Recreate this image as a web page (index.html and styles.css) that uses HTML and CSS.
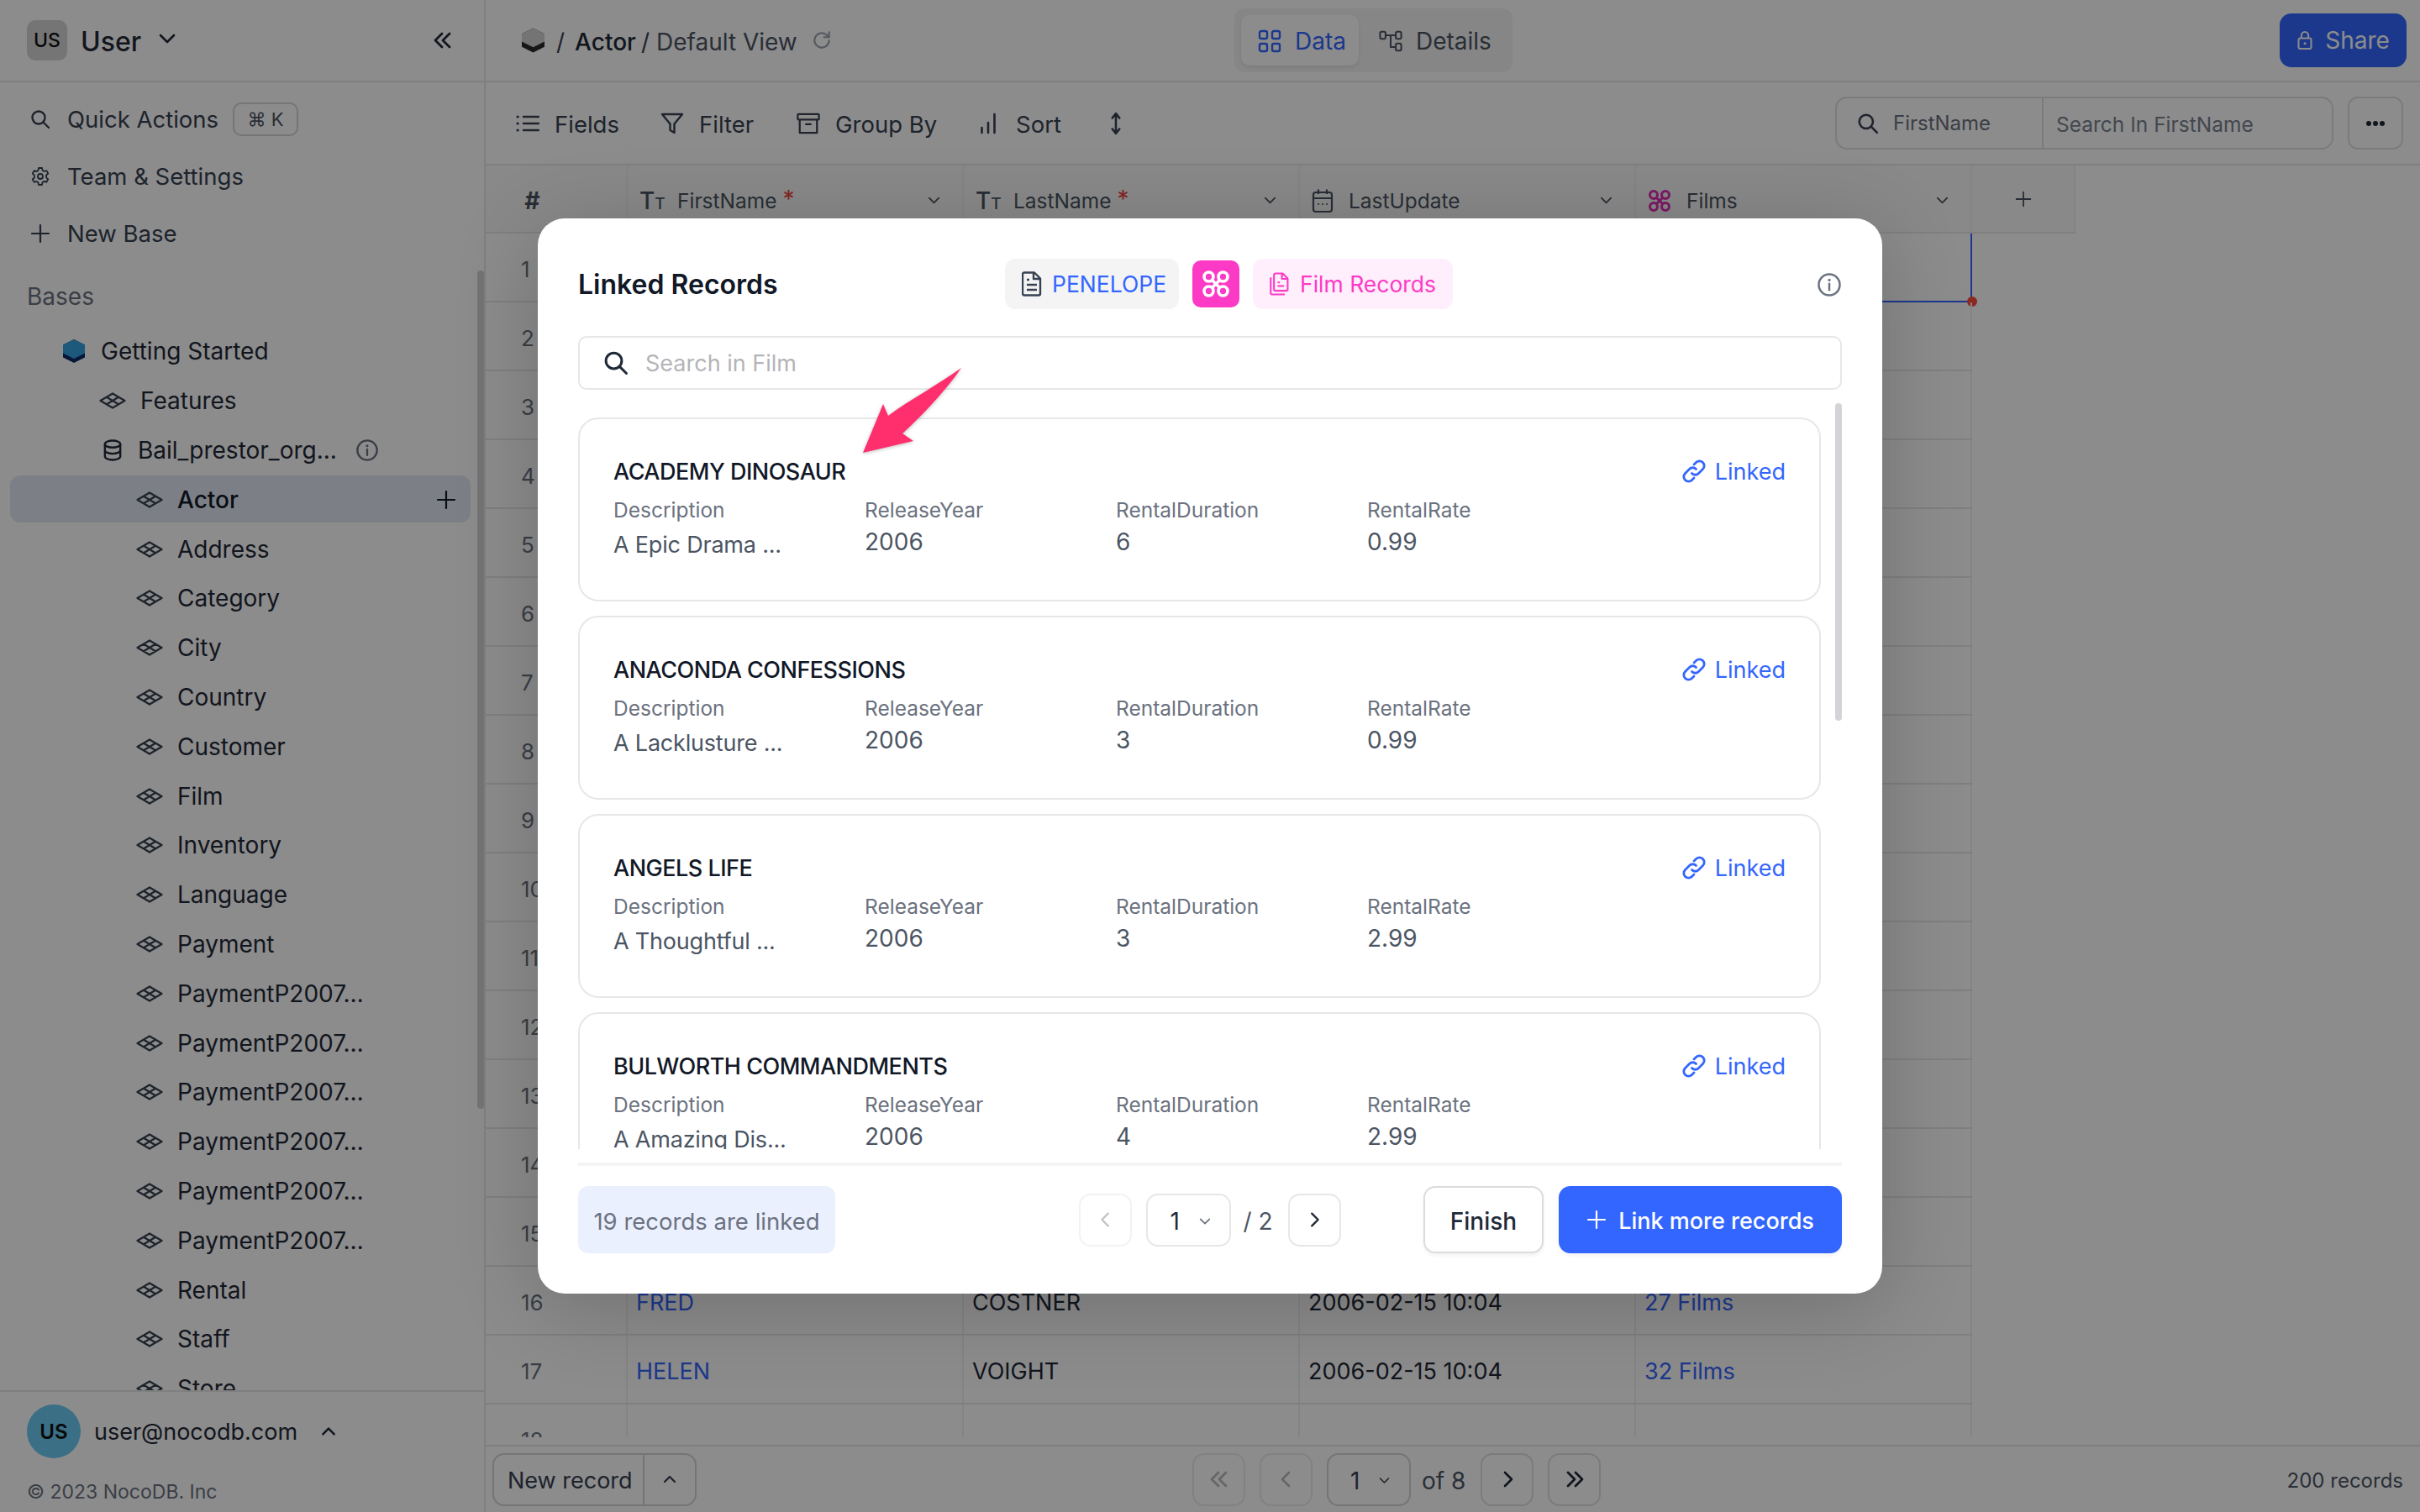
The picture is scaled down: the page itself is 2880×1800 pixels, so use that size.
FILE: index.html
```html
<!DOCTYPE html>
<html lang="en">
  <head>
    <meta charset="UTF-8" />
    <title>Actor - Default View</title>
    <link rel="stylesheet" href="styles.css">
  </head>
  <body>
    <!-- Icon set -->
    <svg class="defs" width="0" height="0">
      <symbol id="i-table" viewBox="0 0 32 20"><path d="M1.5 10 16 1.5 30.500 10 16 18.500ZM9 5.800 23 14.200M23 5.800 9 14.200" fill="none" stroke="currentColor" stroke-width="2.300" stroke-linejoin="round"/></symbol>
      <symbol id="i-search" viewBox="0 0 24 24"><circle cx="10" cy="10" r="7.500" fill="none" stroke="currentColor" stroke-width="2.400"/><path d="m15.500 15.500 6.500 6.500" stroke="currentColor" stroke-width="2.400" stroke-linecap="round"/></symbol>
      <symbol id="i-plus" viewBox="0 0 24 24"><path d="M12 2v20M2 12h20" stroke="currentColor" stroke-width="2.200" stroke-linecap="round"/></symbol>
      <symbol id="i-down" viewBox="0 0 24 24"><path d="m4 8 8 8 8-8" fill="none" stroke="currentColor" stroke-width="2.600" stroke-linecap="round" stroke-linejoin="round"/></symbol>
      <symbol id="i-up" viewBox="0 0 24 24"><path d="m4 16 8-8 8 8" fill="none" stroke="currentColor" stroke-width="3" stroke-linecap="round" stroke-linejoin="round"/></symbol>
      <symbol id="i-left" viewBox="0 0 24 24"><path d="m15 4-8 8 8 8" fill="none" stroke="currentColor" stroke-width="2.600" stroke-linecap="round" stroke-linejoin="round"/></symbol>
      <symbol id="i-right" viewBox="0 0 24 24"><path d="m9 4 8 8-8 8" fill="none" stroke="currentColor" stroke-width="2.600" stroke-linecap="round" stroke-linejoin="round"/></symbol>
      <symbol id="i-lefts" viewBox="0 0 24 24"><path d="m11 4-8 8 8 8M20 4l-8 8 8 8" fill="none" stroke="currentColor" stroke-width="2.800" stroke-linecap="round" stroke-linejoin="round"/></symbol>
      <symbol id="i-rights" viewBox="0 0 24 24"><path d="m4 4 8 8-8 8M13 4l8 8-8 8" fill="none" stroke="currentColor" stroke-width="2.800" stroke-linecap="round" stroke-linejoin="round"/></symbol>
      <symbol id="i-gear" viewBox="0 0 24 24"><g fill="none" stroke="currentColor" stroke-width="1.800" stroke-linejoin="round"><circle cx="12" cy="12" r="3"/><path d="M10 2h4l.6 2.900 1.900 1.100 2.800-.9 2 3.400-2.200 2v2.900l2.200 2-2 3.400-2.800-.9-1.900 1.100L14 22h-4l-.6-2.900-1.900-1.100-2.800.9-2-3.400 2.200-2v-2.900l-2.200-2 2-3.400 2.800.9 1.900-1.100Z"/></g></symbol>
      <symbol id="i-db" viewBox="0 0 24 28"><g fill="none" stroke="currentColor" stroke-width="2.600"><ellipse cx="12" cy="6" rx="10" ry="4.500"/><path d="M2 6v16c0 2.500 4.500 4.500 10 4.500s10-2 10-4.500V6M2 14c0 2.500 4.500 4.500 10 4.500s10-2 10-4.500"/></g></symbol>
      <symbol id="i-info" viewBox="0 0 24 24"><circle cx="12" cy="12" r="10" fill="none" stroke="currentColor" stroke-width="2"/><path d="M12 11v6" stroke="currentColor" stroke-width="2" stroke-linecap="round"/><circle cx="12" cy="7.500" r="1.300" fill="currentColor"/></symbol>
      <symbol id="i-reload" viewBox="0 0 24 24"><path d="M20 12a8 8 0 1 1-2.500-5.800L20 8.500M20 3v5.500h-5.500" fill="none" stroke="currentColor" stroke-width="2" stroke-linecap="round" stroke-linejoin="round"/></symbol>
      <symbol id="i-grid" viewBox="0 0 28 28"><g fill="none" stroke="currentColor" stroke-width="2.400"><rect x="2" y="2" width="9" height="9" rx="2"/><rect x="17" y="2" width="9" height="9" rx="2"/><rect x="2" y="17" width="9" height="9" rx="2"/><rect x="17" y="17" width="9" height="9" rx="2"/></g></symbol>
      <symbol id="i-tree" viewBox="0 0 30 28"><g fill="none" stroke="currentColor" stroke-width="2.200" stroke-linejoin="round"><rect x="1.500" y="2" width="7" height="9" rx="2"/><rect x="21.500" y="2" width="7" height="9" rx="2"/><rect x="21.500" y="17" width="7" height="9" rx="2"/><path d="M8.500 6.500h13M15 6.500v15h6.500"/></g></symbol>
      <symbol id="i-lock" viewBox="0 0 24 28"><g fill="none" stroke="currentColor" stroke-width="2.400" stroke-linejoin="round"><rect x="3" y="11" width="18" height="15" rx="2.500"/><path d="M7 11V7a5 5 0 0 1 10 0v4"/></g><circle cx="12" cy="18.500" r="1.800" fill="currentColor"/></symbol>
      <symbol id="i-list" viewBox="0 0 28 24"><path d="M9 4h18M9 12h18M9 20h18" stroke="currentColor" stroke-width="2.400" stroke-linecap="round"/><path d="M2 4h.2M2 12h.2M2 20h.2" stroke="currentColor" stroke-width="3.200" stroke-linecap="round"/></symbol>
      <symbol id="i-filter" viewBox="0 0 28 28"><path d="M2 3h24l-9.500 11.500V25l-5-3v-7.500Z" fill="none" stroke="currentColor" stroke-width="2.400" stroke-linejoin="round"/></symbol>
      <symbol id="i-archive" viewBox="0 0 30 28"><g fill="none" stroke="currentColor" stroke-width="2.400" stroke-linejoin="round"><rect x="1.500" y="2" width="27" height="7" rx="1"/><path d="M4 9v17h22V9M11 15h8"/></g></symbol>
      <symbol id="i-bars" viewBox="0 0 20 28"><path d="M2.500 25v-6M10 25V13M17.500 25V3" stroke="currentColor" stroke-width="2.600" stroke-linecap="round"/></symbol>
      <symbol id="i-sort" viewBox="0 0 12 26"><path d="M6 3v20M2 7l4-5 4 5M2 19l4 5 4-5" fill="none" stroke="currentColor" stroke-width="2.400" stroke-linecap="round" stroke-linejoin="round"/></symbol>
      <symbol id="i-cal" viewBox="0 0 26 30"><g fill="none" stroke="currentColor" stroke-width="2.200" stroke-linejoin="round"><rect x="2" y="5" width="22" height="23" rx="3"/><path d="M2 12h22M8 1.500V7M18 1.500V7"/></g><path d="M8 19h.1M13 19h.1M18 19h.1" stroke="currentColor" stroke-width="2" stroke-linecap="round"/></symbol>
      <symbol id="i-ltar" viewBox="0 0 28 28"><g fill="none" stroke="currentColor" stroke-width="3"><circle cx="7" cy="7" r="4.500"/><circle cx="21" cy="7" r="4.500"/><circle cx="7" cy="21" r="4.500"/><circle cx="21" cy="21" r="4.500"/><path d="m10.500 10.500 7 7M17.500 10.500l-7 7"/></g></symbol>
      <symbol id="i-doc" viewBox="0 0 24 30"><path d="M3 1.500h12l7 7v18a2 2 0 0 1-2 2H3a2 2 0 0 1-2-2v-23a2 2 0 0 1 2-2ZM14 2v7h7M6 10h3M6 16h12M6 22h12" fill="none" stroke="currentColor" stroke-width="2.400" stroke-linejoin="round"/></symbol>
      <symbol id="i-docs" viewBox="0 0 28 32"><path d="M8 1.500h10l7 7v15a2 2 0 0 1-2 2H8a2 2 0 0 1-2-2v-20a2 2 0 0 1 2-2ZM1.500 7v22a1.500 1.500 0 0 0 1.500 1.500h18M17 2v7h7M11 14h3M11 19h9" fill="none" stroke="currentColor" stroke-width="2.400" stroke-linejoin="round"/></symbol>
      <symbol id="i-link" viewBox="0 0 28 28"><path d="M11.500 16.500a5.500 5.500 0 0 0 8 0l5-5a5.600 5.600 0 0 0-8-8L14 6M16.500 11.500a5.500 5.500 0 0 0-8 0l-5 5a5.600 5.600 0 0 0 8 8L14 22" fill="none" stroke="currentColor" stroke-width="2.800" stroke-linecap="round" stroke-linejoin="round"/></symbol>
    </svg>

    <div class="app">
      <!-- Left navigation -->
      <aside class="sidebar">
        <div class="side-head">
          <span class="ws-badge">US</span>
          <span class="ws-name">User</span>
          <svg class="ws-chevron"><use href="#i-down"/></svg>
          <svg class="collapse"><use href="#i-lefts"/></svg>
        </div>

        <nav class="side-nav">
          <div class="nav-row"><svg class="nav-icon"><use href="#i-search"/></svg>Quick Actions<span class="kbd">⌘ K</span></div>
          <div class="nav-row"><svg class="nav-icon"><use href="#i-gear"/></svg>Team &amp; Settings</div>
          <div class="nav-row"><svg class="nav-icon"><use href="#i-plus"/></svg>New Base</div>
        </nav>

        <div class="bases-label">Bases</div>

        <div class="tree">
          <div class="tree-row lvl1"><svg class="base-icon" viewBox="0 0 26 28"><path d="M13 0 26 6.500v15L13 28 0 21.500v-15Z" fill="#0b2a6b"/><path d="M13 0 26 6.500v10L13 23 0 16.500v-10Z" fill="#36a3e0"/></svg>Getting Started</div>
          <div class="tree-row lvl2"><svg class="table-icon"><use href="#i-table"/></svg>Features</div>
          <div class="tree-row lvl2 db"><svg class="db-icon"><use href="#i-db"/></svg>Bail_prestor_org...<svg class="db-info"><use href="#i-info"/></svg></div>
          <div class="tree-row lvl3 active"><svg class="table-icon"><use href="#i-table"/></svg>Actor<svg class="row-plus"><use href="#i-plus"/></svg></div>
          <div class="tree-row lvl3"><svg class="table-icon"><use href="#i-table"/></svg>Address</div>
          <div class="tree-row lvl3"><svg class="table-icon"><use href="#i-table"/></svg>Category</div>
          <div class="tree-row lvl3"><svg class="table-icon"><use href="#i-table"/></svg>City</div>
          <div class="tree-row lvl3"><svg class="table-icon"><use href="#i-table"/></svg>Country</div>
          <div class="tree-row lvl3"><svg class="table-icon"><use href="#i-table"/></svg>Customer</div>
          <div class="tree-row lvl3"><svg class="table-icon"><use href="#i-table"/></svg>Film</div>
          <div class="tree-row lvl3"><svg class="table-icon"><use href="#i-table"/></svg>Inventory</div>
          <div class="tree-row lvl3"><svg class="table-icon"><use href="#i-table"/></svg>Language</div>
          <div class="tree-row lvl3"><svg class="table-icon"><use href="#i-table"/></svg>Payment</div>
          <div class="tree-row lvl3"><svg class="table-icon"><use href="#i-table"/></svg>PaymentP2007…</div>
          <div class="tree-row lvl3"><svg class="table-icon"><use href="#i-table"/></svg>PaymentP2007…</div>
          <div class="tree-row lvl3"><svg class="table-icon"><use href="#i-table"/></svg>PaymentP2007…</div>
          <div class="tree-row lvl3"><svg class="table-icon"><use href="#i-table"/></svg>PaymentP2007…</div>
          <div class="tree-row lvl3"><svg class="table-icon"><use href="#i-table"/></svg>PaymentP2007…</div>
          <div class="tree-row lvl3"><svg class="table-icon"><use href="#i-table"/></svg>PaymentP2007…</div>
          <div class="tree-row lvl3"><svg class="table-icon"><use href="#i-table"/></svg>Rental</div>
          <div class="tree-row lvl3"><svg class="table-icon"><use href="#i-table"/></svg>Staff</div>
          <div class="tree-row lvl3"><svg class="table-icon"><use href="#i-table"/></svg>Store</div>
        </div>

        <div class="side-foot">
          <div class="user-row">
            <span class="avatar">US</span>
            <span class="user-mail">user@nocodb.com</span>
            <svg class="user-chevron"><use href="#i-up"/></svg>
          </div>
          <div class="copyright">© 2023 NocoDB. Inc</div>
        </div>
      </aside>

      <main class="main">
        <header class="topbar">
          <div class="crumbs">
            <svg class="crumb-base" viewBox="0 0 26 28"><path d="M13 0 26 6.500v15L13 28 0 21.500v-15Z" fill="#2a2a2a"/><path d="M13 0 26 6.500v9L13 22 0 15.500v-9Z" fill="#d4d4d4"/></svg>
            <span class="crumb-sep">/</span>
            <span class="crumb-strong">Actor</span>
            <span class="crumb-sep second">/</span>
            <span class="crumb-view">Default View</span>
            <svg class="crumb-reload"><use href="#i-reload"/></svg>
          </div>
          <div class="tabs">
            <span class="tab tab-on"><svg class="tab-icon"><use href="#i-grid"/></svg>Data</span>
            <span class="tab tab-off"><svg class="tab-icon"><use href="#i-tree"/></svg>Details</span>
          </div>
          <button class="share"><svg class="share-icon"><use href="#i-lock"/></svg>Share</button>
        </header>

        <div class="toolbar">
          <span class="tool tool-fields"><svg class="tool-icon"><use href="#i-list"/></svg>Fields</span>
          <span class="tool tool-filter"><svg class="tool-icon"><use href="#i-filter"/></svg>Filter</span>
          <span class="tool tool-group"><svg class="tool-icon"><use href="#i-archive"/></svg>Group By</span>
          <span class="tool tool-sort"><svg class="tool-icon bars"><use href="#i-bars"/></svg>Sort</span>
          <svg class="row-height"><use href="#i-sort"/></svg>
          <div class="grid-search">
            <span class="search-field"><svg class="search-icon"><use href="#i-search"/></svg>FirstName</span>
            <span class="search-text">Search In FirstName</span>
          </div>
          <button class="more"><span></span><span></span><span></span></button>
        </div>

        <div class="grid">
          <div class="grid-row head">
            <div class="cell num">#</div>
            <div class="cell"><span class="type-tt">T<small>T</small></span>FirstName<span class="req">*</span><svg class="col-menu"><use href="#i-down"/></svg></div>
            <div class="cell"><span class="type-tt">T<small>T</small></span>LastName<span class="req">*</span><svg class="col-menu"><use href="#i-down"/></svg></div>
            <div class="cell"><svg class="type-icon"><use href="#i-cal"/></svg>LastUpdate<svg class="col-menu"><use href="#i-down"/></svg></div>
            <div class="cell"><svg class="type-icon ltar"><use href="#i-ltar"/></svg>Films<svg class="col-menu"><use href="#i-down"/></svg></div>
            <div class="cell add"><svg class="add-icon"><use href="#i-plus"/></svg></div>
          </div>
          <div class="grid-row"><div class="cell num">1</div><div class="cell"></div><div class="cell"></div><div class="cell"></div><div class="cell picked"></div></div>
          <div class="grid-row"><div class="cell num">2</div><div class="cell"></div><div class="cell"></div><div class="cell"></div><div class="cell"></div></div>
          <div class="grid-row"><div class="cell num">3</div><div class="cell"></div><div class="cell"></div><div class="cell"></div><div class="cell"></div></div>
          <div class="grid-row"><div class="cell num">4</div><div class="cell"></div><div class="cell"></div><div class="cell"></div><div class="cell"></div></div>
          <div class="grid-row"><div class="cell num">5</div><div class="cell"></div><div class="cell"></div><div class="cell"></div><div class="cell"></div></div>
          <div class="grid-row"><div class="cell num">6</div><div class="cell"></div><div class="cell"></div><div class="cell"></div><div class="cell"></div></div>
          <div class="grid-row"><div class="cell num">7</div><div class="cell"></div><div class="cell"></div><div class="cell"></div><div class="cell"></div></div>
          <div class="grid-row"><div class="cell num">8</div><div class="cell"></div><div class="cell"></div><div class="cell"></div><div class="cell"></div></div>
          <div class="grid-row"><div class="cell num">9</div><div class="cell"></div><div class="cell"></div><div class="cell"></div><div class="cell"></div></div>
          <div class="grid-row"><div class="cell num">10</div><div class="cell"></div><div class="cell"></div><div class="cell"></div><div class="cell"></div></div>
          <div class="grid-row"><div class="cell num">11</div><div class="cell"></div><div class="cell"></div><div class="cell"></div><div class="cell"></div></div>
          <div class="grid-row"><div class="cell num">12</div><div class="cell"></div><div class="cell"></div><div class="cell"></div><div class="cell"></div></div>
          <div class="grid-row"><div class="cell num">13</div><div class="cell"></div><div class="cell"></div><div class="cell"></div><div class="cell"></div></div>
          <div class="grid-row"><div class="cell num">14</div><div class="cell"></div><div class="cell"></div><div class="cell"></div><div class="cell"></div></div>
          <div class="grid-row"><div class="cell num">15</div><div class="cell"></div><div class="cell"></div><div class="cell"></div><div class="cell"></div></div>
          <div class="grid-row"><div class="cell num">16</div><div class="cell linkish">FRED</div><div class="cell">COSTNER</div><div class="cell">2006-02-15 10:04</div><div class="cell linkish">27 Films</div></div>
          <div class="grid-row"><div class="cell num">17</div><div class="cell linkish">HELEN</div><div class="cell">VOIGHT</div><div class="cell">2006-02-15 10:04</div><div class="cell linkish">32 Films</div></div>
          <div class="grid-row"><div class="cell num">18</div><div class="cell"></div><div class="cell"></div><div class="cell"></div><div class="cell"></div></div>
        </div>

        <footer class="pager-bar">
          <div class="new-record"><span class="new-label">New record</span><span class="new-toggle"><svg class="new-chevron"><use href="#i-up"/></svg></span></div>
          <div class="pager">
            <button class="page-btn off"><svg><use href="#i-lefts"/></svg></button>
            <button class="page-btn off"><svg><use href="#i-left"/></svg></button>
            <span class="page-select">1<svg><use href="#i-down"/></svg></span>
            <span class="page-of">of 8</span>
            <button class="page-btn"><svg><use href="#i-right"/></svg></button>
            <button class="page-btn"><svg><use href="#i-rights"/></svg></button>
          </div>
          <span class="total">200 records</span>
        </footer>
      </main>
    </div>

    <div class="overlay"></div>

    <!-- Link records dialog -->
    <section class="modal">
      <div class="modal-head">
        <h2 class="modal-title">Linked Records</h2>
        <span class="tag tag-grey"><svg class="tag-icon"><use href="#i-doc"/></svg>PENELOPE</span>
        <span class="tag-link"><svg><use href="#i-ltar"/></svg></span>
        <span class="tag tag-pink"><svg class="tag-icon"><use href="#i-docs"/></svg>Film Records</span>
        <svg class="modal-info"><use href="#i-info"/></svg>
      </div>

      <div class="modal-search"><svg class="modal-search-icon"><use href="#i-search"/></svg><span>Search in Film</span></div>

      <div class="record-list">
        <article class="record">
          <div class="record-top"><h3>ACADEMY DINOSAUR</h3><span class="linked"><svg><use href="#i-link"/></svg>Linked</span></div>
          <div class="record-fields">
            <div><label>Description</label><p class="desc">A Epic Drama ...</p></div>
            <div><label>ReleaseYear</label><p>2006</p></div>
            <div><label>RentalDuration</label><p>6</p></div>
            <div><label>RentalRate</label><p>0.99</p></div>
          </div>
        </article>
        <article class="record">
          <div class="record-top"><h3>ANACONDA CONFESSIONS</h3><span class="linked"><svg><use href="#i-link"/></svg>Linked</span></div>
          <div class="record-fields">
            <div><label>Description</label><p class="desc">A Lacklusture ...</p></div>
            <div><label>ReleaseYear</label><p>2006</p></div>
            <div><label>RentalDuration</label><p>3</p></div>
            <div><label>RentalRate</label><p>0.99</p></div>
          </div>
        </article>
        <article class="record">
          <div class="record-top"><h3>ANGELS LIFE</h3><span class="linked"><svg><use href="#i-link"/></svg>Linked</span></div>
          <div class="record-fields">
            <div><label>Description</label><p class="desc">A Thoughtful ...</p></div>
            <div><label>ReleaseYear</label><p>2006</p></div>
            <div><label>RentalDuration</label><p>3</p></div>
            <div><label>RentalRate</label><p>2.99</p></div>
          </div>
        </article>
        <article class="record">
          <div class="record-top"><h3>BULWORTH COMMANDMENTS</h3><span class="linked"><svg><use href="#i-link"/></svg>Linked</span></div>
          <div class="record-fields">
            <div><label>Description</label><p class="desc">A Amazing Dis...</p></div>
            <div><label>ReleaseYear</label><p>2006</p></div>
            <div><label>RentalDuration</label><p>4</p></div>
            <div><label>RentalRate</label><p>2.99</p></div>
          </div>
        </article>
        <div class="list-scroll"></div>
      </div>

      <div class="modal-rule"></div>

      <div class="modal-foot">
        <div class="foot-left"><span class="linked-count">19 records are linked</span></div>
        <div class="foot-pager">
          <button class="mini-btn off"><svg><use href="#i-left"/></svg></button>
          <span class="mini-select">1<svg><use href="#i-down"/></svg></span>
          <span class="mini-of">/ 2</span>
          <button class="mini-btn"><svg><use href="#i-right"/></svg></button>
        </div>
        <div class="foot-right">
          <button class="btn-finish">Finish</button>
          <button class="btn-more"><svg><use href="#i-plus"/></svg>Link more records</button>
        </div>
      </div>

      <!-- annotation arrow from the screenshot -->
      <svg class="arrow" viewBox="0 0 120 104"><path d="M1 102 25 44 31 58C58 38 92 20 118 1 104 22 74 56 48 79L61 88Z" fill="#ff2f6e"/></svg>
    </section>
  </body>
</html>
```

FILE: styles.css
```css
* {
  box-sizing: border-box;
}

html,
body {
  margin: 0;
  width: 2880px;
  height: 1800px;
  overflow: hidden;
}

body {
  font-family: Inter, "Noto Sans", sans-serif;
  font-size: 28px;
  color: #1f2937;
  background: #fff;
}

button {
  font-family: inherit;
  background: none;
  padding: 0;
}

.defs {
  position: absolute;
}

.app {
  display: flex;
  height: 1800px;
}

/* Sidebar */
.sidebar {
  width: 578px;
  flex: none;
  display: flex;
  flex-direction: column;
  border-right: 2px solid #e7e7e9;
  position: relative;
}

.sidebar::after {
  content: "";
  position: absolute;
  left: 568px;
  top: 322px;
  width: 8px;
  height: 998px;
  border-radius: 4px;
  background: #d4d4d8;
}

.side-head {
  height: 98px;
  flex: none;
  display: flex;
  align-items: center;
  padding: 0 0 0 32px;
  border-bottom: 2px solid #e7e7e9;
}

.ws-badge {
  width: 48px;
  height: 48px;
  border-radius: 10px;
  background: #d6d6d6;
  color: #111;
  font-size: 23px;
  font-weight: 500;
  display: flex;
  align-items: center;
  justify-content: center;
}

.ws-name {
  margin-left: 16px;
  margin-top: 3px;
  font-size: 32px;
  font-weight: 500;
}

.ws-chevron {
  width: 24px;
  height: 24px;
  margin-left: 19px;
  margin-top: -4px;
}

.collapse {
  width: 24px;
  height: 24px;
  margin-left: 304px;
}

.side-nav {
  padding-top: 10px;
  flex: none;
}

.nav-row {
  height: 68px;
  display: flex;
  align-items: center;
  padding-left: 36px;
  color: #374151;
  font-size: 27.500px;
}

.nav-icon {
  width: 24px;
  height: 24px;
  margin-right: 20px;
  flex: none;
}

.kbd {
  margin-left: 17px;
  width: 78px;
  height: 40px;
  border: 2px solid #d5d5d9;
  border-radius: 10px;
  font-size: 22px;
  display: flex;
  align-items: center;
  justify-content: center;
  color: #4b5563;
}

.bases-label {
  margin: 23px 0 17px 32px;
  height: 36px;
  line-height: 36px;
  color: #6b7280;
  flex: none;
}

.tree {
  flex: 1;
  overflow: hidden;
  position: relative;
}

.tree-row {
  height: 58.800px;
  padding-top: 2px;
  display: flex;
  align-items: center;
  white-space: nowrap;
  position: relative;
}

.lvl1 {
  padding-left: 75px;
}

.lvl2 {
  padding-left: 118px;
}

.lvl3 {
  padding-left: 162px;
}

.active {
  background: #e2e8f5;
  border-radius: 12px;
  margin: 1.400px 16px 1.400px 12px;
  height: 56px;
  padding-left: 150px;
  color: #111827;
  font-weight: 500;
}

.base-icon {
  width: 26px;
  height: 28px;
  margin-right: 19px;
}

.table-icon {
  width: 32px;
  height: 20px;
  margin-right: 17px;
  color: #374151;
}

.db-icon {
  width: 22px;
  height: 26px;
  margin: 0 19px 0 5px;
}

.db-info {
  width: 28px;
  height: 28px;
  margin-left: 22px;
  color: #6b7280;
}

.row-plus {
  width: 24px;
  height: 24px;
  margin-left: auto;
  margin-right: 17px;
}

.side-foot {
  height: 145px;
  flex: none;
  border-top: 2px solid #e7e7e9;
  padding: 15px 0 0 32px;
}

.user-row {
  display: flex;
  align-items: center;
  height: 64px;
}

.avatar {
  width: 64px;
  height: 64px;
  border-radius: 50%;
  background: #6bcbf5;
  color: #111;
  font-size: 24px;
  font-weight: 600;
  display: flex;
  align-items: center;
  justify-content: center;
}

.user-mail {
  margin-left: 16px;
  font-size: 27px;
}

.user-chevron {
  width: 20px;
  height: 20px;
  margin-left: 27px;
}

.copyright {
  margin-top: 26px;
  font-size: 23px;
  color: #6b7280;
}

/* Main area */
.main {
  flex: 1;
  min-width: 0;
  display: flex;
  flex-direction: column;
}

.topbar {
  height: 98px;
  flex: none;
  display: flex;
  align-items: center;
  border-bottom: 2px solid #e7e7e9;
  padding-left: 43px;
  position: relative;
}

.crumbs {
  display: flex;
  align-items: center;
  width: 848px;
  flex: none;
  padding-top: 3px;
}

.crumb-base {
  width: 27px;
  height: 30px;
  margin-top: -3px;
}

.crumb-sep {
  margin: 0 12px 0 14px;
  color: #374151;
}

.crumb-sep.second {
  margin: 0 8px 0 6px;
}

.crumb-strong {
  font-weight: 500;
}

.crumb-view {
  color: #4b5563;
}

.crumb-reload {
  width: 26px;
  height: 26px;
  margin-left: 16px;
  color: #9ca3af;
  margin-top: -3px;
}

.tabs {
  height: 76px;
  width: 331px;
  background: #f4f4f5;
  border-radius: 12px;
  padding: 8px;
  display: flex;
  align-items: center;
}

.tab {
  height: 60px;
  width: 140px;
  padding-left: 20px;
  padding-top: 2px;
  display: flex;
  align-items: center;
  color: #4b5563;
  border-radius: 10px;
}

.tab-off {
  padding-left: 24px;
}

.tab-on {
  background: #fff;
  color: #3366ff;
  box-shadow: 0 2px 4px rgba(0, 0, 0, 0.08);
}

.tab-icon {
  width: 28px;
  height: 28px;
  margin-right: 16px;
  flex: none;
}

.share {
  margin-left: auto;
  margin-right: 16px;
  width: 151px;
  height: 64px;
  border: none;
  border-radius: 14px;
  background: #3366ff;
  color: #fff;
  font-size: 28px;
  display: flex;
  align-items: center;
  justify-content: center;
}

.share-icon {
  width: 20px;
  height: 26px;
  margin-right: 14px;
}

.toolbar {
  height: 99px;
  flex: none;
  display: flex;
  align-items: center;
  border-bottom: 2px solid #e7e7e9;
  padding-left: 36px;
  color: #374151;
  font-size: 27.500px;
}

.tool {
  display: flex;
  align-items: center;
  width: 172px;
  flex: none;
  padding-top: 3px;
}

.tool-filter {
  width: 162px;
}

.tool-group {
  width: 218px;
}

.tool-sort {
  width: 152px;
}

.tool-icon {
  width: 28px;
  height: 28px;
  margin-right: 18px;
  flex: none;
  margin-top: -3px;
}

.bars {
  width: 20px;
  margin-right: 23px;
}

.row-height {
  width: 14px;
  height: 28px;
  color: #374151;
  margin-left: 3px;
}

.grid-search {
  margin-left: auto;
  width: 593px;
  height: 63px;
  border: 2px solid #e0e0e3;
  border-radius: 14px;
  display: flex;
  align-items: center;
  color: #6b7280;
}

.search-field {
  width: 246px;
  height: 100%;
  flex: none;
  display: flex;
  align-items: center;
  padding-left: 24px;
  border-right: 2px solid #e0e0e3;
  font-size: 24px;
}

.search-icon {
  width: 26px;
  height: 26px;
  margin-right: 17px;
  color: #374151;
}

.search-text {
  padding-left: 15px;
  font-size: 24.500px;
  color: #7b8291;
  padding-top: 2px;
}

.more {
  margin: 0 20px 0 17px;
  width: 66px;
  height: 63px;
  border: 2px solid #e0e0e3;
  border-radius: 12px;
  display: flex;
  align-items: center;
  justify-content: center;
  gap: 2px;
}

.more span {
  width: 6px;
  height: 6px;
  border-radius: 50%;
  background: #1f2937;
}

/* Data grid */
.grid {
  height: 1514px;
  margin-bottom: 9px;
  overflow: hidden;
  flex: none;
}

.grid-row {
  display: flex;
  height: 82px;
  width: 1769px;
  border-bottom: 2px solid #e7e7e9;
  font-size: 27px;
}

.head {
  height: 81px;
  width: 1892px;
  background: #fafafa;
  color: #4b5563;
  font-size: 24.500px;
}

.cell {
  width: 400px;
  flex: none;
  display: flex;
  align-items: center;
  padding: 5px 0 0 10px;
  border-right: 2px solid #f0f0f2;
  white-space: nowrap;
  position: relative;
}

.cell.num {
  width: 169px;
  padding-left: 42px;
  color: #6b7280;
  font-size: 26px;
}

.head .cell {
  padding-left: 14px;
  padding-top: 4px;
}

.head .cell.num {
  padding-left: 46px;
  font-weight: 700;
  font-size: 28px;
  font-style: italic;
  color: #4b5563;
}

.type-tt {
  font-size: 28px;
  width: 45px;
  flex: none;
  color: #4b5563;
  font-weight: 500;
}

.type-tt small {
  font-size: 19px;
}

.type-icon {
  width: 26px;
  height: 30px;
  margin-right: 18px;
  flex: none;
}

.ltar {
  width: 28px;
  height: 28px;
  color: #e02fb8;
}

.req {
  color: #ef4444;
  margin-left: 7px;
  margin-top: -4px;
  font-size: 28px;
}

.col-menu {
  position: absolute;
  right: 25px;
  width: 17px;
  height: 17px;
}

.cell.add {
  width: 123px;
  padding: 0;
  justify-content: center;
}

.add-icon {
  width: 20px;
  height: 20px;
}

.linkish {
  color: #3366ff;
}

.picked {
  border-right: 2px solid #3366ff;
  border-bottom: 2px solid #3366ff;
  height: 82px;
}

.picked::after {
  content: "";
  position: absolute;
  right: -8px;
  bottom: -7px;
  width: 12px;
  height: 12px;
  border-radius: 50%;
  background: #ff4a3f;
}

.pager-bar {
  flex: 1;
  display: flex;
  align-items: center;
  position: relative;
  border-top: 2px solid #e7e7e9;
  padding: 0 20px 0 8px;
}

.new-record {
  width: 243px;
  height: 63px;
  border: 2px solid #d5d5d9;
  border-radius: 14px;
  display: flex;
  align-items: center;
  color: #374151;
  font-size: 27px;
}

.new-label {
  width: 179px;
  padding: 3px 0 0 16px;
  border-right: 2px solid #d5d5d9;
  height: 100%;
  display: flex;
  align-items: center;
}

.new-toggle {
  flex: 1;
  display: flex;
  justify-content: center;
}

.new-chevron {
  width: 18px;
  height: 18px;
}

.pager {
  margin-left: 590px;
  display: flex;
  align-items: center;
  color: #374151;
}

.page-btn {
  width: 63px;
  height: 63px;
  border: 2px solid #e0e0e3;
  border-radius: 14px;
  margin-right: 17px;
  color: #1f2937;
  display: flex;
  align-items: center;
  justify-content: center;
}

.page-btn svg {
  width: 24px;
  height: 24px;
}

.page-btn.off {
  color: #bbb;
  border-color: #ececee;
}

.page-select {
  width: 100px;
  height: 63px;
  border: 2px solid #d5d5d9;
  border-radius: 14px;
  display: flex;
  align-items: center;
  padding: 3px 0 0 26px;
  gap: 22px;
}

.page-select svg {
  width: 15px;
  height: 15px;
}

.page-of {
  margin: 3px 18px 0 13px;
  color: #4b5563;
}

.total {
  margin-left: auto;
  margin-top: 3px;
  font-size: 24px;
  color: #4b5563;
}

/* Dialog */
.overlay {
  position: absolute;
  inset: 0;
  background: rgba(0, 0, 0, 0.45);
}

.modal {
  position: absolute;
  left: 640px;
  top: 260px;
  width: 1600px;
  height: 1280px;
  padding: 48px;
  background: #fff;
  border-radius: 32px;
  box-shadow: 0 16px 100px rgba(0, 0, 0, 0.2);
  display: flex;
  flex-direction: column;
}

.modal-head {
  height: 60px;
  flex: none;
  display: flex;
  align-items: center;
}

.modal-title {
  width: 508px;
  margin: 0;
  font-size: 32px;
  font-weight: 600;
  color: #111827;
}

.tag {
  height: 60px;
  border-radius: 12px;
  display: flex;
  align-items: center;
  padding: 0 0 0 20px;
  font-size: 26.500px;
  white-space: nowrap;
}

.tag-grey {
  width: 207px;
  background: #f4f4f5;
  color: #3366ff;
}

.tag-pink {
  width: 238px;
  background: #ffeefb;
  color: #fc3ac6;
}

.tag-icon {
  width: 24px;
  height: 30px;
  margin-right: 12px;
  flex: none;
}

.tag-grey .tag-icon {
  color: #374151;
}

.tag-link {
  width: 56px;
  height: 56px;
  margin: 0 16px;
  border-radius: 10px;
  background: #fc3ac6;
  color: #fff;
  display: flex;
  align-items: center;
  justify-content: center;
}

.tag-link svg {
  width: 34px;
  height: 34px;
}

.modal-info {
  width: 30px;
  height: 30px;
  margin-left: auto;
  margin-top: 2px;
  color: #6b7280;
}

.modal-search {
  margin-top: 32px;
  height: 64px;
  flex: none;
  border: 2px solid #e7e7e9;
  border-radius: 10px;
  display: flex;
  align-items: center;
  padding-left: 28px;
  color: #b4b4b8;
  font-size: 27px;
}

.modal-search-icon {
  width: 30px;
  height: 30px;
  margin-right: 20px;
  color: #1f2937;
}

.record-list {
  margin-top: 16px;
  height: 888px;
  flex: none;
  padding-top: 17px;
  overflow: hidden;
  position: relative;
  display: flex;
  flex-direction: column;
  gap: 17px;
}

.record {
  width: 1479px;
  height: 219px;
  flex: none;
  border: 2px solid #e7e7e9;
  border-radius: 24px;
  padding: 44px 40px 0;
}

.record-top {
  display: flex;
  justify-content: space-between;
  align-items: center;
  height: 36px;
}

.record-top h3 {
  margin: 0;
  font-size: 27px;
  font-weight: 500;
  letter-spacing: -0.500px;
  color: #111827;
}

.linked {
  display: flex;
  align-items: center;
  color: #3366ff;
  font-size: 27px;
  margin-right: 0;
}

.linked svg {
  width: 28px;
  height: 28px;
  margin-right: 11px;
}

.record-fields {
  display: flex;
  margin-top: 12px;
}

.record-fields div {
  width: 299px;
}

.record-fields label {
  display: block;
  font-size: 24.500px;
  line-height: 32px;
  color: #6b7280;
}

.record-fields p {
  margin: 4px 0 0;
  font-size: 28px;
  line-height: 36px;
  color: #4b5563;
}

.record-fields .desc {
  margin-top: 8px;
  font-size: 27px;
  letter-spacing: -0.200px;
}

.list-scroll {
  position: absolute;
  right: 0;
  top: 0;
  width: 8px;
  height: 378px;
  border-radius: 4px;
  background: #d4d4d8;
}

.modal-rule {
  margin-top: 16px;
  height: 4px;
  flex: none;
  background: #f4f4f5;
}

.modal-foot {
  margin-top: 24px;
  height: 80px;
  flex: none;
  display: grid;
  grid-template-columns: 1fr auto 1fr;
  align-items: center;
}

.linked-count {
  display: inline-flex;
  align-items: center;
  justify-content: center;
  width: 306px;
  height: 80px;
  padding-top: 3px;
  border-radius: 12px;
  background: #ebf0ff;
  color: #6b7280;
  font-size: 27.500px;
}

.foot-left {
  display: flex;
}

.foot-pager {
  display: flex;
  align-items: center;
  color: #4b5563;
}

.mini-btn {
  width: 63px;
  height: 63px;
  border: 2px solid #e7e7e9;
  border-radius: 14px;
  color: #1f2937;
  display: flex;
  align-items: center;
  justify-content: center;
}

.mini-btn svg {
  width: 22px;
  height: 22px;
}

.mini-btn.off {
  color: #c4c4c8;
  border-color: #f2f2f3;
}

.mini-select {
  margin-left: 17px;
  width: 101px;
  height: 63px;
  border: 2px solid #e7e7e9;
  border-radius: 14px;
  display: flex;
  align-items: center;
  padding: 3px 0 0 26px;
  gap: 22px;
  color: #1f2937;
}

.mini-select svg {
  width: 16px;
  height: 16px;
  color: #6b7280;
}

.mini-of {
  margin: 3px 18px 0 14px;
}

.foot-right {
  display: flex;
  justify-content: flex-end;
  gap: 18px;
}

.btn-finish {
  width: 143px;
  height: 80px;
  border: 2px solid #dcdcdc;
  border-radius: 14px;
  background: #fff;
  font-size: 28px;
  font-weight: 500;
  color: #1f2937;
  box-shadow: 0 3px 4px rgba(0, 0, 0, 0.05);
  padding-top: 3px;
}

.btn-more {
  width: 337px;
  height: 80px;
  border: none;
  border-radius: 14px;
  background: #3366ff;
  color: #fff;
  font-size: 27px;
  font-weight: 500;
  display: flex;
  align-items: center;
  justify-content: center;
  box-shadow: 0 3px 4px rgba(0, 0, 0, 0.05);
  padding-top: 3px;
}

.btn-more svg {
  width: 24px;
  height: 24px;
  margin-right: 14px;
  margin-top: -3px;
}

.arrow {
  position: absolute;
  left: 386px;
  top: 177px;
  width: 120px;
  height: 104px;
  filter: drop-shadow(0 1px 2px rgba(0, 0, 0, 0.25));
}
```
